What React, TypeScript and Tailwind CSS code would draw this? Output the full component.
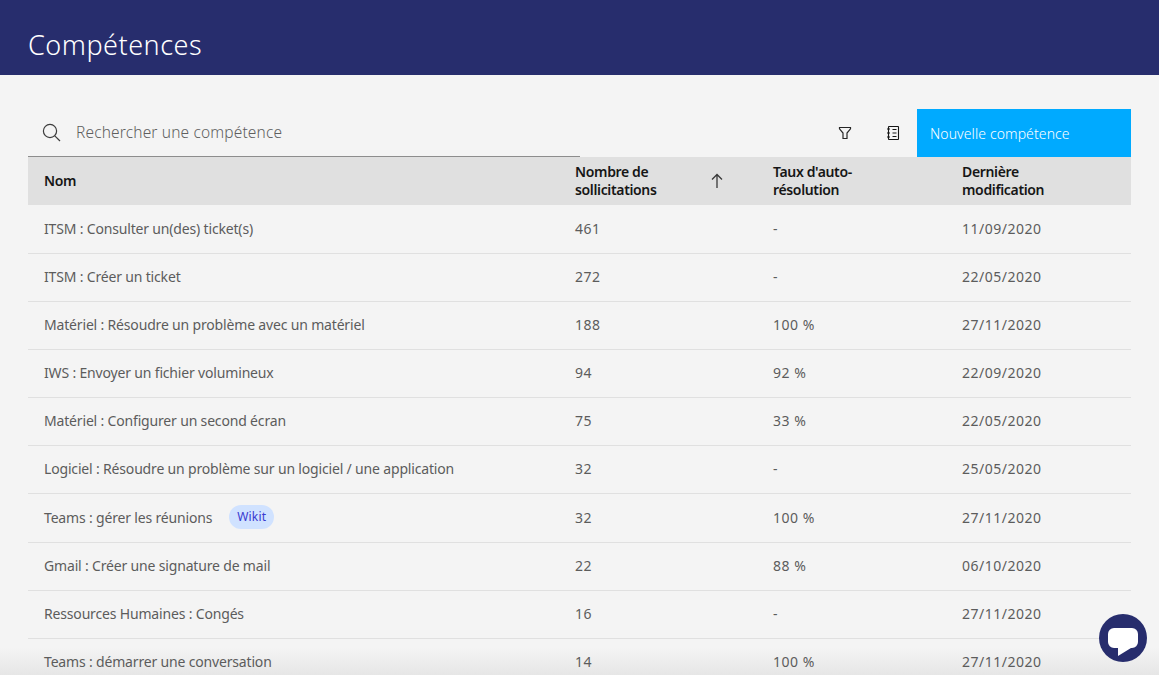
import React from "react";

const rows = [
  { name: "ITSM : Consulter un(des) ticket(s)", count: "461", rate: "-", date: "11/09/2020" },
  { name: "ITSM : Créer un ticket", count: "272", rate: "-", date: "22/05/2020" },
  { name: "Matériel : Résoudre un problème avec un matériel", count: "188", rate: "100 %", date: "27/11/2020" },
  { name: "IWS : Envoyer un fichier volumineux", count: "94", rate: "92 %", date: "22/09/2020" },
  { name: "Matériel : Configurer un second écran", count: "75", rate: "33 %", date: "22/05/2020" },
  { name: "Logiciel : Résoudre un problème sur un logiciel / une application", count: "32", rate: "-", date: "25/05/2020" },
  { name: "Teams : gérer les réunions", tag: "Wikit", count: "32", rate: "100 %", date: "27/11/2020" },
  { name: "Gmail : Créer une signature de mail", count: "22", rate: "88 %", date: "06/10/2020" },
  { name: "Ressources Humaines : Congés", count: "16", rate: "-", date: "27/11/2020" },
  { name: "Teams : démarrer une conversation", count: "14", rate: "100 %", date: "27/11/2020" },
];

const SearchIcon = () => (
  <svg width="20" height="20" viewBox="0 0 20 20" fill="none" stroke="#3d3d3d" strokeWidth="1.2">
    <circle cx="8" cy="8" r="6.600" />
    <path d="M12.800 12.800L18 18" />
  </svg>
);

const ArrowIcon = () => (
  <svg width="16" height="16" viewBox="0 0 16 16" fill="none" stroke="#393939" strokeWidth="1.3">
    <path d="M8 15V1.500M3 6.500l5-5 5 5" />
  </svg>
);

const FilterIcon = () => (
  <svg width="16" height="16" viewBox="0 0 16 16" fill="none" stroke="#262626" strokeWidth="1.2">
    <path d="M2.500 2.500h11v1.400L10 8v5.500H6V8L2.500 3.900z" />
  </svg>
);

const NotebookIcon = () => (
  <svg width="16" height="16" viewBox="0 0 16 16" fill="none" stroke="#161616" strokeWidth="1.1">
    <rect x="3.500" y="1.500" width="10" height="13" rx="0.500" />
    <path d="M2 4h3M2 8h3M2 12h3M7.500 4.500h4M7.500 8h4M7.500 11.500h4" />
  </svg>
);

export default function App() {
  return (
    <div className="relative h-[675px] overflow-hidden bg-[#f4f4f4] font-['Noto_Sans',sans-serif]">
      <div className="pointer-events-none absolute inset-x-0 bottom-0 h-[28px] bg-gradient-to-t from-[#e6e6e6] to-transparent" />

      <header className="flex h-[75px] items-end bg-[#272d6d] pb-[12px] pl-[28px]">
        <h1 className="text-[27px] leading-[36px] font-light tracking-[0.5px] text-white">Compétences</h1>
      </header>

      <main className="relative mx-[28px] mt-[34px]">
        <div className="flex h-[48px]">
          <div className="flex w-[552px] items-center border-b border-[#8d8d8d] pl-[14px]">
            <SearchIcon />
            <span className="ml-[14px] pt-[1px] text-[15.5px] font-light tracking-[0.15px] text-[#5f5f5f]">Rechercher une compétence</span>
          </div>
          <div className="flex flex-1 items-center justify-end">
            <div className="mr-[16px] flex w-[16px] justify-center"><FilterIcon /></div>
            <div className="mr-[16px] ml-[16px] flex w-[16px] justify-center"><NotebookIcon /></div>
            <button className="h-[48px] w-[214px] bg-[#00aaff] pl-[13px] text-left text-[14px] font-light tracking-[0.1px] text-white">
              Nouvelle compétence
            </button>
          </div>
        </div>

        <div className="grid h-[48px] grid-cols-[531px_198px_189px_185px] items-center bg-[#e0e0e0] text-[14px] leading-[18px] font-semibold tracking-[-0.35px] text-[#161616]">
          <div className="pl-[16px]">Nom</div>
          <div className="flex items-center pl-[16px]">
            <span className="w-[134px]">Nombre de<br />sollicitations</span>
            <ArrowIcon />
          </div>
          <div className="pl-[16px]">Taux d'auto-<br />résolution</div>
          <div className="pl-[16px]">Dernière<br />modification</div>
        </div>

        <div className="pt-[1px]">
          {rows.map((row) => (
            <div
              key={row.name}
              className="grid grid-cols-[531px_198px_189px_185px] items-center border-b border-[#e0e0e0] pt-[11px] pb-[13px] text-[14px] leading-[23px] text-[#5c5c5c]"
            >
              <div className="flex items-center pl-[16px] tracking-[-0.17px]">
                {row.name}
                {row.tag && (
                  <span className="ml-[17px] rounded-full bg-[#d0e2ff] px-[8px] text-[12px] leading-[24px] tracking-[0.16px] text-[#3a3ad0]">
                    {row.tag}
                  </span>
                )}
              </div>
              <div className="pl-[16px] tracking-[0.5px]">{row.count}</div>
              <div className="pl-[16px] tracking-[0.5px]">{row.rate}</div>
              <div className="pl-[16px] tracking-[0.5px]">{row.date}</div>
            </div>
          ))}
        </div>
      </main>

      <button className="absolute top-[614px] left-[1099px] flex h-[48px] w-[48px] items-center justify-center rounded-full bg-[#272d6d] pt-[8px]">
        <svg width="30" height="28" viewBox="0 0 30 28" fill="#fff">
          <path d="M6 0h18a6 6 0 0 1 6 6v8a6 6 0 0 1-6 6H23l-13 8v-8H6a6 6 0 0 1-6-6V6a6 6 0 0 1 6-6z" />
        </svg>
      </button>
    </div>
  );
}
